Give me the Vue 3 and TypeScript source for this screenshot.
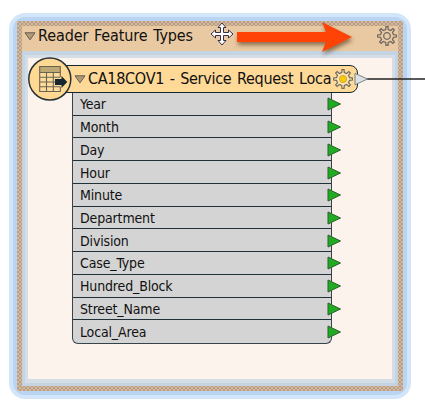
<script setup lang="ts">
const attributes: string[] = [
  'Year', 'Month', 'Day', 'Hour', 'Minute', 'Department',
  'Division', 'Case_Type', 'Hundred_Block', 'Street_Name', 'Local_Area',
]

function gearPath(outer: number, inner: number, teeth: number): string {
  const step = (Math.PI * 2) / teeth
  const points: string[] = []
  const at = (r: number, a: number) => `${(r * Math.sin(a)).toFixed(2)} ${(-r * Math.cos(a)).toFixed(2)}`
  for (let i = 0; i < teeth; i++) {
    const a = i * step
    points.push(at(inner, a - step * 0.25), at(outer, a - step * 0.14), at(outer, a + step * 0.14), at(inner, a + step * 0.25))
  }
  return `M${points.join('L')}Z`
}
const gear = gearPath(9.4, 6.6, 8)
</script>

<template>
  <main class="canvas">
    <section class="bookmark">
      <div class="hatch">
        <header class="bar">
          <svg class="fold" width="12" height="9" viewBox="0 0 12 9"><path d="M1 .8H11L6 7.8Z" /></svg>
          <span class="bar-title">Reader Feature Types</span>
          <svg class="bar-gear" width="22" height="22" viewBox="-11 -11 22 22">
            <path :d="gear" /><circle r="3.3" />
          </svg>
        </header>
        <div class="outer-frame"><div class="inner-frame">
          <div class="node">
            <div class="node-head">
              <svg class="fold" width="12" height="9" viewBox="0 0 12 9"><path d="M1 .8H11L6 7.8Z" /></svg>
              <span class="node-title">CA18COV1 - Service Request Loca</span>
              <svg class="node-gear" width="22" height="22" viewBox="-11 -11 22 22">
                <path :d="gear" /><circle r="3.6" />
              </svg>
            </div>
            <ul class="attrs">
              <li v-for="name in attributes" :key="name">
                <span>{{ name }}</span>
                <svg class="port" width="15" height="14" viewBox="0 0 15 14"><path d="M1 1V13L13.5 7Z" /></svg>
              </li>
            </ul>
          </div>
        </div></div>
      </div>
    </section>
    <svg class="badge" width="44" height="44" viewBox="28 57 44 44">
      <circle cx="49.8" cy="79" r="21" fill="#ffd994" stroke="#293235" stroke-width="1.5" />
      <path d="M39.7 66.5H60.3V91.5H39.7Z" fill="#ffdc9c" />
      <path d="M39.7 66.5H60.3V72.5H39.7Z" fill="#bea873" />
      <path d="M60.3 77V66.5H39.7V91.5H60.3V87M39.7 72.5H60.3M39.7 77.2H60.3M39.7 82H56M39.7 86.7H60.3M46.5 72.5V91.5M53.3 72.5V91.5" fill="none" stroke="#686451" stroke-width="1.1" />
      <path d="M55 79H61.5V76L67.3 82L61.5 88V85H55Z" fill="#15262e" />
    </svg>
    <svg class="connector" width="71" height="16" viewBox="354 71 71 16">
      <path d="M366 79H425" stroke="#222" stroke-width="1.4" />
      <path d="M355 73.3V84.8L367.5 79Z" fill="#dce0e2" stroke="#788489" />
    </svg>
    <svg class="cursor" width="24" height="24" viewBox="-12 -12 24 24">
      <path d="M0 -11L4 -6.5H1.5V-1.5H6.5V-4L11 0L6.5 4V1.5H1.5V6.5H4L0 11L-4 6.5H-1.5V1.5H-6.5V4L-11 0L-6.5 -4V-1.5H-1.5V-6.5H-4Z" />
    </svg>
    <svg class="arrow" width="130" height="44" viewBox="230 16 130 44">
      <path d="M237 32H326L322 22L352 37L322 52L326 42H237Z" />
    </svg>
  </main>
</template>

<style>
body { background: #fff; overflow: hidden; }
</style>
<style scoped>
* { box-sizing: border-box; }
.canvas {
  position: relative; width: 425px; height: 410px; padding: 13px 0 0 9px;
  font-family: "DejaVu Sans Condensed", "DejaVu Sans", sans-serif; font-stretch: condensed; color: #111;
}
svg { display: block; flex: none; overflow: visible; }
.bookmark {
  width: 402px; height: 386px; padding: 4px; border: 4px solid #d3e6f9;
  border-radius: 16px; background: #b9d5f3;
}
.hatch {
  height: 370px; padding: 5px; background: repeating-conic-gradient(#b69f88 0 25%, #d8b897 0 50%) 0 0 / 4px 4px;
}
.bar { display: flex; align-items: center; height: 25px; padding: 0 0 5px 2px; background: #e9c9a2; }
.fold path { fill: #b59a76; stroke: #625b51; }
.bar-title {
  margin-left: 2px; width: 338px; font-size: 16px; line-height: 20px; white-space: nowrap;
  letter-spacing: -.1px; word-spacing: 1.2px;
}
.bar-gear path, .bar-gear circle { fill: #e9c9a2; stroke: #6f6964; stroke-width: 1.3; }
.outer-frame { height: 335px; padding: 4px 3px 3px; background: #c5d4e2; }
.inner-frame { height: 328px; border: solid #d5dde6; border-width: 3px 3px 4px; padding: 7px 0 0 22px; background: #fbf3ec; }
.node { width: 308px; }
.node-head {
  display: flex; align-items: center; height: 28px; padding-left: 23px;
  border: 1.5px solid #15262e; border-radius: 8px; background: #ffd997;
}
.node-title {
  width: 243.5px; margin-left: 2px; font-size: 16px; line-height: 20px; white-space: nowrap;
  letter-spacing: -.28px; word-spacing: 1.3px;
}
.node-gear path { fill: #ffe5b3; stroke: #706b5e; stroke-width: 1.2; }
.node-gear circle { fill: #f7ca12; stroke: #d4a92c; }
.attrs {
  width: 260px; height: 251px; margin: 0 0 0 22px; padding: 0; list-style: none;
  display: grid; grid-template-rows: repeat(11, 1fr); background: #d4d4d4;
  border: solid #35444b; border-width: 0 1px 1px; border-radius: 0 0 6px 6px;
}
.attrs li {
  display: flex; align-items: center; justify-content: space-between; min-height: 0;
  padding-left: 7px; margin-right: -11px; font-size: 14px; line-height: 18px;
  letter-spacing: -.15px; position: relative;
}
.attrs li:not(:last-child)::after {
  content: ""; position: absolute; left: 0; right: 11px; bottom: 0; height: 1px; background: #203139;
}
.port path { fill: #20ac20; stroke: #315c31; }
.badge { position: absolute; left: 28px; top: 57px; }
.connector { position: absolute; left: 354px; top: 71px; }
.cursor { position: absolute; left: 210px; top: 22px; }
.cursor path { fill: #fff; stroke: #343244; }
.arrow { position: absolute; left: 230px; top: 16px; }
.arrow path { fill: #ff4205; filter: drop-shadow(1px 3px 2px rgba(80, 50, 20, .6)); }
</style>
